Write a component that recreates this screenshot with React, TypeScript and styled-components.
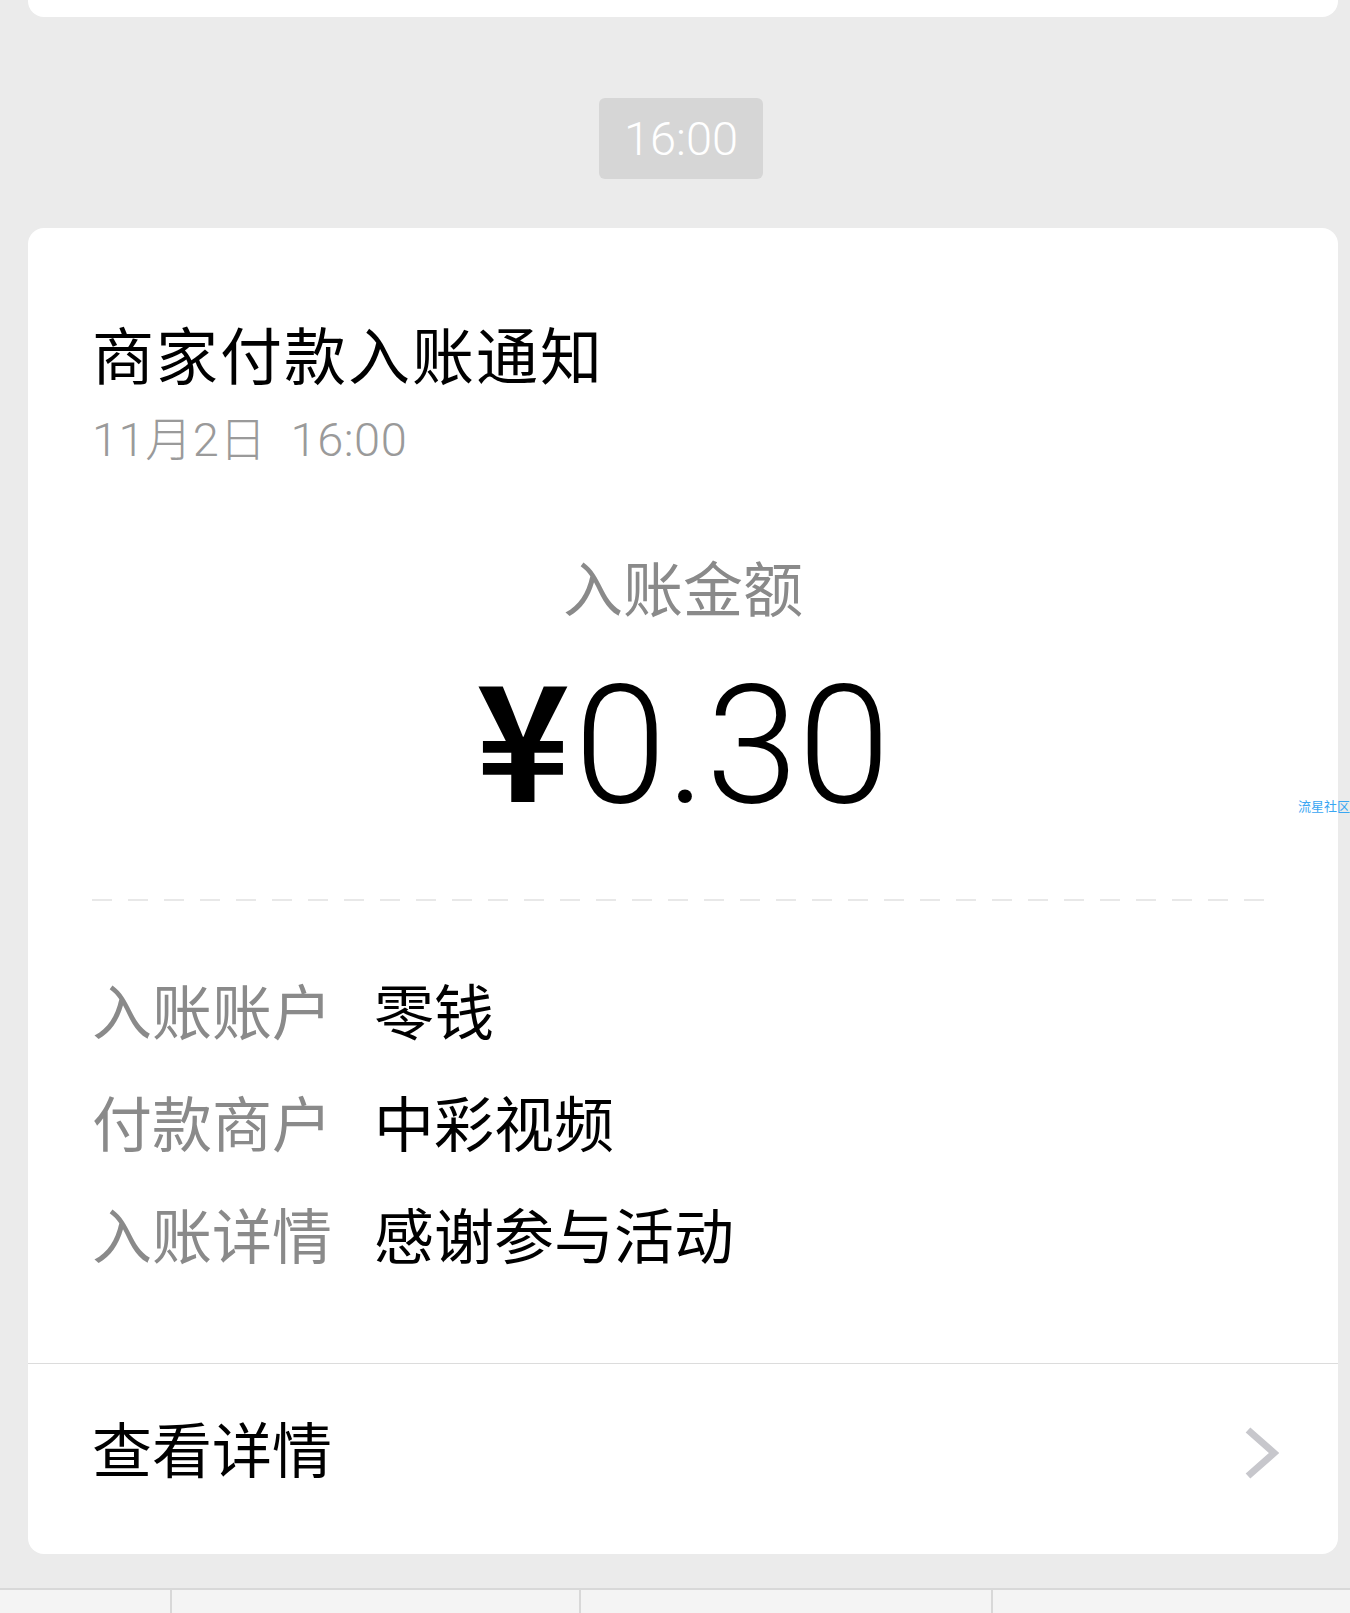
import React from 'react';
import styled, { createGlobalStyle } from 'styled-components';

const GlobalStyle = createGlobalStyle`
    html, body {
        margin: 0;
        padding: 0;
        background: #ebebeb;
    }
    body {
        font-family: "Liberation Sans", "Noto Sans CJK SC", sans-serif;
    }
`;

const Page = styled.div`
    position: relative;
    display: flex;
    flex-direction: column;
    width: 1350px;
    height: 1613px;
    overflow: hidden;
    background: #ebebeb;
`;

const Feed = styled.div`
    flex: 1;
    display: flex;
    flex-direction: column;
    padding: 0 12px 0 28px;
`;

const PreviousCard = styled.div`
    height: 17px;
    background: #fff;
    border-radius: 0 0 16px 16px;
`;

const TimeRow = styled.div`
    display: flex;
    justify-content: center;
    margin-top: 81px;
    padding-right: 4px;
`;

const TimePill = styled.div`
    width: 164px;
    height: 81px;
    display: flex;
    align-items: center;
    justify-content: center;
    border-radius: 6px;
    background: #d6d6d6;
    color: #fff;
    font-family: Roboto, "Liberation Sans", sans-serif;
    font-weight: 300;
    font-size: 47px;
`;

const Card = styled.div`
    margin-top: 49px;
    background: #fff;
    border-radius: 16px;
    overflow: hidden;
`;

const CardBody = styled.div`
    padding: 100px 64px 94px;
`;

const Title = styled.div`
    font-size: 62px;
    line-height: 62px;
    letter-spacing: 2px;
    color: #000;
`;

const DateLine = styled.div`
    margin-top: 27px;
    font-family: Roboto, "Noto Sans CJK SC", sans-serif;
    font-weight: 300;
    font-size: 47px;
    line-height: 46px;
    letter-spacing: 0.5px;
    color: #9a9a9a;
    white-space: pre;
`;

const AmountLabel = styled.div`
    margin-top: 99px;
    font-size: 60px;
    line-height: 60px;
    color: #8a8a8a;
    text-align: center;
`;

const Amount = styled.div`
    margin-top: 41px;
    font-family: Roboto, "Liberation Sans", sans-serif;
    font-weight: 300;
    font-size: 166px;
    line-height: 165px;
    color: #000;
    text-align: center;
`;

const Yen = styled.span`
    font-family: "Noto Sans CJK SC", sans-serif;
    font-weight: 700;
    font-size: 160px;
    line-height: 0;
    margin-right: 4px;
`;

const Dashed = styled.div`
    margin-top: 71px;
    height: 2px;
    background: repeating-linear-gradient(to right, #e8e8e8 0 20px, transparent 20px 36px);
`;

const Rows = styled.div`
    margin-top: 84px;
    display: flex;
    flex-direction: column;
    gap: 52px;
`;

const Row = styled.div`
    display: flex;
    font-size: 60px;
    line-height: 60px;
`;

const Label = styled.span`
    flex: 0 0 282px;
    color: #8a8a8a;
`;

const Value = styled.span`
    color: #000;
`;

const Footer = styled.div`
    display: flex;
    align-items: center;
    justify-content: space-between;
    border-top: 1px solid #dcdcdc;
    padding: 59px 59px 71px 64px;
`;

const FooterText = styled.span`
    font-size: 60px;
    line-height: 60px;
    color: #000;
`;

const BottomBar = styled.div`
    display: flex;
    height: 23px;
    border-top: 2px solid #d8d8d8;
    background: #f4f4f4;
`;

const BarCell = styled.div<{ $width: number }>`
    width: ${(p) => p.$width}px;
    border-right: 2px solid #d8d8d8;
    &:last-child {
        flex: 1;
        border-right: none;
    }
`;

const Watermark = styled.div`
    position: absolute;
    top: 799px;
    left: 1298px;
    font-family: "Noto Sans CJK SC", sans-serif;
    font-size: 13px;
    line-height: 13px;
    color: #3aa6f2;
    white-space: nowrap;
`;

const rows = [
    { label: '入账账户', value: '零钱' },
    { label: '付款商户', value: '中彩视频' },
    { label: '入账详情', value: '感谢参与活动' },
];

function Chevron() {
    return (
        <svg width="34" height="52" viewBox="0 0 34 52">
            <polyline points="3,3 29,26 3,49" fill="none" stroke="#c7c7cc" strokeWidth="7" />
        </svg>
    );
}

export default function App() {
    return (
        <>
            <GlobalStyle />
            <Page>
                <Feed>
                    <PreviousCard />
                    <TimeRow>
                        <TimePill>16:00</TimePill>
                    </TimeRow>
                    <Card>
                        <CardBody>
                            <Title>商家付款入账通知</Title>
                            <DateLine>11月2日  16:00</DateLine>
                            <AmountLabel>入账金额</AmountLabel>
                            <Amount>
                                <Yen>¥</Yen>0.30
                            </Amount>
                            <Dashed />
                            <Rows>
                                {rows.map((row) => (
                                    <Row key={row.label}>
                                        <Label>{row.label}</Label>
                                        <Value>{row.value}</Value>
                                    </Row>
                                ))}
                            </Rows>
                        </CardBody>
                        <Footer>
                            <FooterText>查看详情</FooterText>
                            <Chevron />
                        </Footer>
                    </Card>
                </Feed>
                <BottomBar>
                    <BarCell $width={170} />
                    <BarCell $width={407} />
                    <BarCell $width={410} />
                    <BarCell $width={0} />
                </BottomBar>
                <Watermark>流星社区</Watermark>
            </Page>
        </>
    );
}
